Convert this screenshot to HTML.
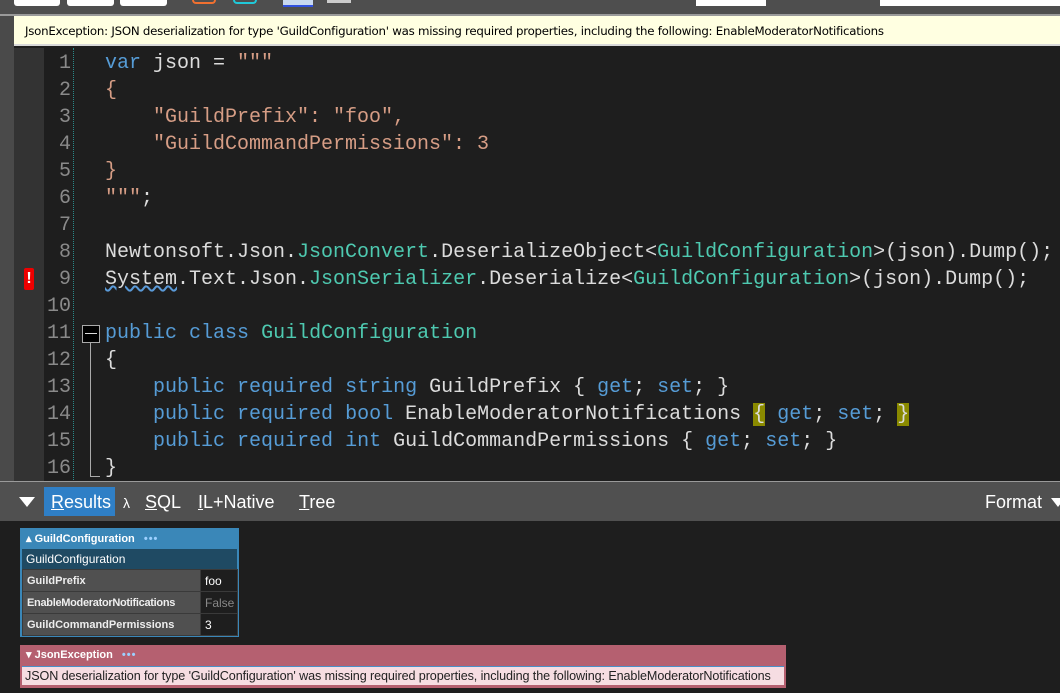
<!DOCTYPE html>
<html><head><style>
*{margin:0;padding:0;box-sizing:border-box}
body{width:1060px;height:693px;overflow:hidden;background:#1e1e1e;position:relative;font-family:"Liberation Sans",sans-serif}
.abs{position:absolute}
.code{font-family:"Liberation Mono",monospace;font-size:20px;white-space:pre;color:#dcdcdc;line-height:27px}
.ln{position:absolute;left:40px;width:31px;text-align:right;color:#8a8a8a;font-family:"Liberation Mono",monospace;font-size:20px;line-height:27px}
.k{color:#569cd6}.t{color:#4ec9b0}.s{color:#d69d85}
.hl{background:#8a8a00}
.tbl{table-layout:fixed}
.tbl td{font-size:11px;height:22px;padding:0 4px;border:1px solid #3a3a3a;white-space:nowrap;overflow:hidden}
</style></head><body>
<div class="abs" style="left:0;top:0;width:1060px;height:14px;background:#4e4e4e"></div>
<div class="abs" style="left:14px;top:0;width:46px;height:6px;background:#fff;border-radius:0 0 3px 3px"></div>
<div class="abs" style="left:67px;top:0;width:47px;height:6px;background:#fff;border-radius:0 0 3px 3px"></div>
<div class="abs" style="left:120px;top:0;width:47px;height:6px;background:#fff;border-radius:0 0 3px 3px"></div>
<div class="abs" style="left:192px;top:0;width:24px;height:4px;border:2px solid #f07030;border-top:none;border-radius:0 0 8px 8px"></div>
<div class="abs" style="left:233px;top:0;width:24px;height:4px;border:2px solid #20c8d8;border-top:none;border-radius:0 0 8px 8px"></div>
<div class="abs" style="left:283px;top:0;width:30px;height:7px;background:#c8d8f0;border-bottom:2px solid #3050e0"></div>
<div class="abs" style="left:327px;top:0;width:24px;height:3px;background:#ccc"></div>
<div class="abs" style="left:696px;top:0;width:70px;height:6px;background:#fff"></div>
<div class="abs" style="left:880px;top:0;width:180px;height:6px;background:#fff"></div>
<div class="abs" style="left:0;top:14px;width:1060px;height:2px;background:#9a9a9a"></div>
<div class="abs" style="left:14px;top:16px;width:1046px;height:30px;background:#ffffe1;border-bottom:2px solid #d8d8d8;font-size:11.8px;color:#000;padding:8px 0 0 11px;font-family:'DejaVu Sans',sans-serif;letter-spacing:-0.25px;white-space:nowrap">JsonException: JSON deserialization for type 'GuildConfiguration' was missing required properties, including the following: EnableModeratorNotifications</div>
<div class="abs" style="left:0;top:16px;width:14px;height:466px;background:#4a4a4a"></div>
<div class="abs" style="left:14px;top:48px;width:30px;height:434px;background:#333"></div>
<div class="abs" style="left:73px;top:48px;width:0;height:434px;border-left:1px dotted #2a8a8a"></div>
<div class="ln" style="top:50px">1<br>2<br>3<br>4<br>5<br>6<br>7<br>8<br>9<br>10<br>11<br>12<br>13<br>14<br>15<br>16</div>
<div class="abs" style="left:24px;top:268px;width:10px;height:22px;background:#e00;border-radius:2px;color:#fff;font-weight:bold;font-size:16px;text-align:center;line-height:22px">!</div>
<div class="abs" style="left:82px;top:325px;width:18px;height:18px;border:1px solid #aaa;background:#000"><div style="margin:7px 2px 0;height:1px;background:#ddd"></div></div>
<div class="abs" style="left:90px;top:343px;width:10px;height:134px;border-left:1px solid #aaa;border-bottom:1px solid #aaa"></div>
<div class="abs code" style="left:105px;top:50px"><span class="k">var</span> json = <span class="s">"""</span>
<span class="s">{</span>
<span class="s">    "GuildPrefix": "foo",</span>
<span class="s">    "GuildCommandPermissions": 3</span>
<span class="s">}</span>
<span class="s">"""</span>;

Newtonsoft.Json.<span class="t">JsonConvert</span>.DeserializeObject&lt;<span class="t">GuildConfiguration</span>&gt;(json).Dump();
<span style="text-decoration:underline wavy #5a9ad8">System</span>.Text.Json.<span class="t">JsonSerializer</span>.Deserialize&lt;<span class="t">GuildConfiguration</span>&gt;(json).Dump();

<span class="k">public</span> <span class="k">class</span> <span class="t">GuildConfiguration</span>
{
    <span class="k">public</span> <span class="k">required</span> <span class="k">string</span> GuildPrefix { <span class="k">get</span>; <span class="k">set</span>; }
    <span class="k">public</span> <span class="k">required</span> <span class="k">bool</span> EnableModeratorNotifications <span class="hl">{</span> <span class="k">get</span>; <span class="k">set</span>; <span class="hl">}</span>
    <span class="k">public</span> <span class="k">required</span> <span class="k">int</span> GuildCommandPermissions { <span class="k">get</span>; <span class="k">set</span>; }
}</div>
<div class="abs" style="left:0;top:481px;width:1060px;height:1px;background:#9a9a9a"></div>
<div class="abs" style="left:0;top:482px;width:1060px;height:39px;background:#505050"></div>
<div class="abs" style="left:19px;top:497px;width:0;height:0;border-left:8px solid transparent;border-right:8px solid transparent;border-top:10px solid #fff"></div>
<div class="abs" style="left:44px;top:487px;width:71px;height:29px;background:#2f7fc6"></div>
<div class="abs" style="left:51px;top:492px;color:#fff;font-size:18px"><u>R</u>esults</div>
<div class="abs" style="left:123px;top:495px;color:#fff;font-size:14px">λ</div>
<div class="abs" style="left:145px;top:492px;color:#fff;font-size:18px"><u>S</u>QL</div>
<div class="abs" style="left:198px;top:492px;color:#fff;font-size:18px"><u>I</u>L+Native</div>
<div class="abs" style="left:299px;top:492px;color:#fff;font-size:18px"><u>T</u>ree</div>
<div class="abs" style="left:985px;top:492px;color:#fff;font-size:18px">Format</div>
<div class="abs" style="left:1051px;top:498px;width:0;height:0;border-left:7px solid transparent;border-right:7px solid transparent;border-top:9px solid #fff"></div>
<div class="abs" style="left:20px;top:528px;width:219px;height:109px;background:#3a87b8;padding:2px">
 <div style="height:19px;color:#fff;font-size:11px;font-weight:bold;padding-left:4px;line-height:19px">▴ GuildConfiguration <span style="color:#9cd0ff;margin-left:6px;letter-spacing:1px">•••</span></div>
 <div style="height:20px;background:#1f4a63;color:#fff;font-size:12px;padding-left:4px;line-height:20px">GuildConfiguration</div>
 <table class="tbl" style="border-collapse:collapse;width:215px">
  <colgroup><col style="width:178px"><col style="width:37px"></colgroup>
  <tr><td style="background:#505050;color:#eee;font-weight:bold">GuildPrefix</td><td style="background:#1e1e1e;color:#fff;font-size:12px">foo</td></tr>
  <tr><td style="background:#505050;color:#eee;font-weight:bold;letter-spacing:-0.3px">EnableModeratorNotifications</td><td style="background:#1e1e1e;color:#888;font-size:12px">False</td></tr>
  <tr><td style="background:#505050;color:#eee;font-weight:bold">GuildCommandPermissions</td><td style="background:#1e1e1e;color:#fff;font-size:12px">3</td></tr>
 </table>
</div>
<div class="abs" style="left:20px;top:645px;width:766px;height:43px;background:#b56070;padding:0 2px 2px">
 <div style="height:21px;color:#fff;font-size:11px;font-weight:bold;padding-left:4px;line-height:21px">▾ JsonException <span style="color:#9cd0ff;margin-left:6px;letter-spacing:1px">•••</span></div>
 <div style="height:19px;background:#f6dde2;border-top:1px solid #4a90c8;color:#222;font-size:12.6px;padding-left:3px;line-height:18px;white-space:nowrap;overflow:hidden;letter-spacing:-0.1px">JSON deserialization for type 'GuildConfiguration' was missing required properties, including the following: EnableModeratorNotifications</div>
</div>
</body></html>
